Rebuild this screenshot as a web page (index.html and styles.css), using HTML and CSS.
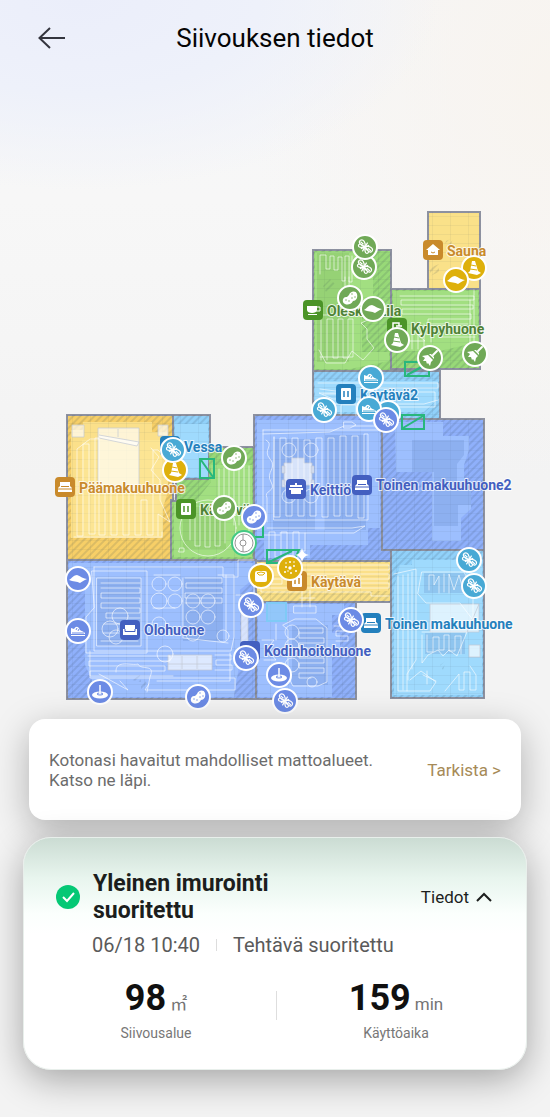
FILE: index.html
```html
<!DOCTYPE html>
<html lang="fi">
<head>
<meta charset="utf-8">
<meta name="viewport" content="width=device-width, initial-scale=1">
<title>Siivouksen tiedot</title>
<link rel="stylesheet" href="styles.css">
</head>
<body>
<div class="screen">
  <header class="topbar">
    <button class="back" type="button" aria-label="Takaisin">
      <svg width="28" height="24" viewBox="0 0 28 24"><path d="M27 12H2M12 2 1.500 12 12 22"/></svg>
    </button>
    <h1 class="topbar-title">Siivouksen tiedot</h1>
  </header>

  <main class="content">
    <svg class="map" viewBox="0 76 550 642" role="img" aria-label="Kodin kartta">
      <defs>
        <pattern id="hatch" width="5" height="5" patternUnits="userSpaceOnUse" patternTransform="rotate(45)">
          <rect width="2" height="5" class="hatch-line"/>
        </pattern>
        <pattern id="tiles" width="18" height="9" patternUnits="userSpaceOnUse">
          <path class="tile-line" d="M0 .5H18M.5 0V9"/>
        </pattern>
        <symbol id="knot" viewBox="-12 -12 24 24">
          <g transform="rotate(42)" fill="none" stroke="#fff" stroke-width="1.200">
            <path d="M0 0C-2-4-7-5-8-2S-4 2 0 0C-4 0-7 1-6 3S-2 3 0 0C2-4 7-5 8-2S4 2 0 0C4 0 7 1 6 3S2 3 0 0"/>
            <path d="M-1-5 1 5M2-4-2 4M-7-1-3-1M3-1 7-1"/>
          </g>
        </symbol>
        <symbol id="shoe" viewBox="-12 -12 24 24">
          <path fill="#fff" d="M-7-3-4-2C-2-5 0-5 2-1 4 1 7 0 7 3H-7Z"/><path stroke="#fff" d="M-7 4.500H7"/><path class="cut" d="M-1-3-2-1M1-2 0 0M-6 2H6"/>
        </symbol>
        <symbol id="rug" viewBox="-12 -12 24 24"><path fill="#fff" d="M-9 1C-6-1-4-4-1-4 2-3 6 0 9 0 6 1 4 3 2 4-1 2-5 3-9 1Z"/></symbol>
        <symbol id="cone" viewBox="-12 -12 24 24">
          <path fill="#fff" d="M-2-7H1L4 3 7 5 3 7-6 5-4 3Z"/><path class="cut" d="M-3-3 2-2M-4 1 3 2"/>
        </symbol>
        <symbol id="blob" viewBox="-12 -12 24 24">
          <path fill="#fff" d="M-1-3C0-7 6-8 7-4 8 0 6 3 3 3 1 7-3 7-5 6-9 4-7-2-3-1Z"/>
          <g class="cut-fill"><circle cx="2" cy="-4" r=".7"/><circle cx="5" cy="-1" r=".7"/><circle cx="-4" cy="2" r=".7"/><circle cx="-1" cy="3" r=".7"/><circle cx="2" cy="0" r=".7"/></g>
        </symbol>
        <symbol id="broom" viewBox="-12 -12 24 24">
          <path stroke="#fff" stroke-width="2" stroke-linecap="round" d="M7-7 3-3"/><path fill="#fff" d="M-1-4 1-4 4-1 4 1Z"/><path fill="#fff" d="M-2-3 3 2 1 4 0 8-2 5-3 6-4 3-7 3-5 0-8-2Z"/>
        </symbol>
        <symbol id="plate" viewBox="-12 -12 24 24">
          <ellipse cy="3" rx="8" ry="3.500" fill="#fff"/><ellipse class="cut" cy="2" rx="3" ry="1" fill="none"/><path stroke="#fff" stroke-width="1.500" d="M0-7V2"/>
        </symbol>
        <symbol id="scale" viewBox="-12 -12 24 24">
          <rect x="-6" y="-5" width="12" height="11" rx="2" fill="#fff"/><path class="cut" fill="none" d="M-4-3Q0-5 4-3L2-1H-2Z"/>
        </symbol>
        <symbol id="dots" viewBox="-12 -12 24 24">
          <g fill="#fff"><circle r="1.700"/><circle cx="-4" cy="-1" r="1"/><circle cx="4" cy="-2" r="1"/><circle cx="0" cy="-6" r="1"/><circle cx="-5" cy="4" r="1"/><circle cx="1" cy="5" r="1"/><circle cx="6" cy="3" r="1"/><circle cx="-2" cy="3" r=".8"/><circle cx="-4" cy="-5" r=".8"/><circle cx="4" cy="-6" r=".8"/></g>
        </symbol>
        <symbol id="bed" viewBox="-10 -10 20 20"><path fill="#fff" d="M-5-5H5V-1L7 1V5H-7V1L-5-1Z"/><path class="cut" d="M-7 2H7M-4-.5H4"/></symbol>
        <symbol id="door" viewBox="-10 -10 20 20"><rect x="-5" y="-6" width="10" height="12" rx="1" fill="#fff"/><path class="cut" stroke-width="1.500" d="M-2-3V3M2-3V3"/></symbol>
        <symbol id="sofa" viewBox="-10 -10 20 20"><path fill="#fff" d="M-5-5H5V-1H7V5H-7V-1H-5Z"/><path class="cut" fill="none" d="M-5-1V1.500H5V-1"/></symbol>
        <symbol id="pot" viewBox="-10 -10 20 20"><path fill="#fff" d="M-1-6H1V-4H6V-2H-6V-4H-1ZM-7-1H7V1H5V5H-5V1H-7Z"/></symbol>
        <symbol id="cup" viewBox="-10 -10 20 20"><path fill="#fff" d="M-6-4H4V0C4 4-6 4-6 0ZM-5 4H4V5H-5Z"/><path fill="none" stroke="#fff" d="M4-3H7V1H3"/></symbol>
        <symbol id="house" viewBox="-10 -10 20 20"><path fill="#fff" d="M0-6 7 0H5V5H-5V0H-7Z"/><path class="cut" fill="none" d="M-2 2Q0 4 2 2"/></symbol>
        <symbol id="shower" viewBox="-10 -10 20 20"><path fill="none" stroke="#fff" stroke-width="1.500" d="M-4 6V-5H2V-2M-1-2H5"/></symbol>
      </defs>

      <!-- Rooms -->
      <g class="rooms">
        <path class="room yellow" d="M428 212H480V289H428Z"/>
        <path class="room green" d="M313 250H391V371H313Z"/>
        <path class="room green" d="M391 289H480V369H391Z"/>
        <path class="room sky" d="M313 371H440V419H313Z"/>
        <path class="room blue" d="M254 415H382V550H391V561H254Z"/>
        <path class="room blue" d="M382 419H484V550H382Z"/>
        <path class="room sky" d="M391 550H484V698H391Z"/>
        <path class="room amber" d="M67 415H173V500H171V560H67Z"/>
        <path class="room sky" d="M173 415H210V479H173Z"/>
        <path class="room green" d="M208 447H254V560H171V501H176V479H208Z"/>
        <path class="room yellow" d="M256 561H391V602H256Z"/>
        <path class="room blue" d="M67 560H256V699H67Z"/>
        <path class="room blue" d="M256 602H356V699H256Z"/>
      </g>
      <path class="hatching" d="M391 289H480V369H440V419H484V698H391V602H356V699H67V415H210V447H254V415H313V250H391Z"/>

      <!-- Areas the robot has covered -->
      <g class="covered">
        <path class="yellow" d="M430 214H478V287H430Z"/>
        <path class="green" d="M315 252H365L373 275V300L362 312V352H389V361L350 369H315ZM393 291H478V342L440 351H393Z"/>
        <path class="sky" d="M315 381H438V399L424 412H315Z"/>
        <path class="blue" d="M257 420H380V528H368V545H310V558H264V540H257Z"/>
        <path class="blue" d="M395 422H443V436H469V450L464 465V489H471V509L461 518V541H432V472H396Z"/>
        <path class="sky" d="M400 565H412V560H482V695H394V588Z"/>
        <path class="pale" d="M71 430H83V422H152V432H168V491L163 508V538H71Z"/>
        <path class="sky" d="M175 424H208V477H175Z"/>
        <path class="green" d="M211 465H252V557H174V502H195L211 482Z"/>
        <path class="pale" d="M258 563H388V591H258Z"/>
        <path class="blue" d="M69 563H253V579L240 590V660L234 697H92V680L85 665V582H69Z"/>
        <path class="blue" d="M258 604H344V615H332V633H340V650H332V697H258Z"/>
      </g>
      <g class="hatching">
        <path d="M446 241 453 238 451 245 444 247ZM430 268 439 264V272L430 276ZM323 286 330 279 335 284 326 292ZM141 684 145 680 147 684 141 692ZM132 680 140 675 141 682ZM440 665 446 661 443 670Z"/>
      </g>
      <path class="tiles" d="M428 212H480V289H480V369H440V419H484V698H391V602H356V699H67V415H210V447H254V415H313V250H391V289H428Z"/>

      <!-- Carpets and furniture -->
      <g class="carpet">
        <path d="M412 440H464V455L457 464V483H471V505H458V526H434V472H412Z"/>
        <path d="M97 578H141V646H97ZM183 578H223V641H183Z"/>
        <path d="M273 439H315V530H273ZM325 435H366V530H325Z"/>
        <path d="M82 440H163V536H82Z" class="warm"/>
        <path d="M183 507H226V549H183Z" class="leaf"/>
        <path d="M317 253H349V362H317Z" class="leaf"/>
        <path d="M424 573H466V593H424ZM425 633H465V654H425ZM292 625H328V685H292Z"/>
      </g>
      <g class="furniture">
        <path d="M98 428H139V490H98ZM158 425H168V436H158ZM72 425H84V437H72Z"/>
        <path d="M99 435 139 442 137 446 99 438M118 429V437"/>
        <path d="M284 463H292V458H304V463H312V485H284ZM282 466H285V473H282ZM311 466H314V473H311ZM282 480H285V487H282ZM311 480H314V487H311Z"/>
        <path d="M168 655H212V670H168ZM182 656V669M197 656V669M168 664H212"/>
        <path d="M430 604H479V632H430ZM469 645H480V657H469ZM479 604 467 632"/>
        <path d="M241 602H248V645H241Z"/>
      </g>

      <!-- Cleaning route -->
      <g class="route">
        <path d="M320 274V255H326V269H330V256H334V270H338V257H342V281H345V256H349V282H352V256M345 277V296M349 277V290M321 319V360M327 360V319H333V358H338V319H343V358H348V319H353V357H320M318 315H367L368 320 361 323 367 329V339L374 348 363 360 352 351 345 363H326L319 350"/>
        <path d="M400 296H474V300H401V305H473V309H402V314H471V319H428V324H468M400 341H425L417 334H431V342M412 325V349M418 324V349M424 324V349M474 290V343M470 300V350M440 337H475"/>
        <path d="M318 383H438V388H362V392H435V407H395M320 389 351 393H319L333 399H380M320 404H424L438 400M341 415V405H356V416M323 394H338"/>
        <path d="M263 430H383M263 430V535H280M263 434 330 432 344 426H380M266 440C275 445 262 450 270 459S265 472 271 482 263 490 267 498V522M344 422H352L356 425 350 428H344Z"/>
        <path d="M274 437V517H280V438H286V516H292V438H298V516H304V440H310V516H316V438H322V517H328V438H334V516H340V436H346V516H352V436H358V518H364V434H368V520H274Z"/>
        <path d="M267 528H352L365 526 354 533H280M269 558V532H275V557H281V532H287V557H293V532H299V551H305V533"/>
        <circle cx="289" cy="450" r="7"/><circle cx="311" cy="450" r="7"/><circle cx="289" cy="496" r="7"/><circle cx="311" cy="496" r="7"/>
        <path d="M99 439H90L77 449V536H83V444H89V534H95V438H99V535H105V490H111V535H117V490H123V535H129V490H135V535H141V500H147V535H153V450H158L163 455M74 537H162V532M151 448 159 457 151 470 160 480V500L170 522 158 514V536"/>
        <circle cx="208" cy="528" r="28"/>
        <path d="M190 540V512H195V546H200V506H205V547H210V506H215V546H220V509H225V543M219 469V507M224 468V500M229 467V500M234 467V525M239 467V525M244 466V525M249 466V535M180 548H184V552H179Z"/>
        <path d="M258 565H389V570H281V574H389V579H318V583H389V588H261V592H371V596H389M262 579H282V584H258"/>
        <path d="M94 567H223V577H238V560H254M94 567V651H231L234 637V575H218M92 571H147V653H86V617L94 608ZM97 578H141V646H97Z"/>
        <path d="M101 583H140M101 588H140V593H101V598H140V603H101V608H140V613H106V618H140M104 624H120M103 633H119M101 641H138M154 575H180M153 608H175M156 634H181M185 578H222V583H186V588H222V593H185V598H222V603H185M88 656H170V661H89V666H165V671H90V676H173M90 651V678H235V690H145L149 684M230 653V681H157M215 655H231V660H216V665H232V670H215M183 578V638L228 643M226 575V640"/>
        <path d="M116 672C115 659 132 666 138 664 141 671 156 663 150 677L147 692M99 674 128 690 120 681M254 575V595H236"/>
        <circle cx="159" cy="584" r="7"/><circle cx="159" cy="601" r="8"/><circle cx="159" cy="624" r="7"/><circle cx="175" cy="584" r="7"/><circle cx="175" cy="601" r="7"/><circle cx="193" cy="601" r="7"/><circle cx="208" cy="601" r="7"/><circle cx="193" cy="617" r="7"/><circle cx="208" cy="617" r="7"/><circle cx="193" cy="634" r="7"/><circle cx="223" cy="636" r="6"/><circle cx="120" cy="616" r="8"/><circle cx="110" cy="629" r="8"/><circle cx="165" cy="654" r="8"/><circle cx="116" cy="637" r="7"/>
        <path d="M283 625 295 619H316L327 628V682L318 686H293L288 677V630ZM276 624V640M262 640H274L267 649 276 660H264M299 628H323V633H299V638H324V643H299V648H324V653H299V658H324V663H299V668H324V673H299V678H311M334 626H348V631H336V636H348V641H336M294 606H316V613H294ZM302 590V607M310 590V607M300 598H315"/>
        <circle cx="292" cy="632" r="7"/><circle cx="292" cy="646" r="7"/><circle cx="292" cy="665" r="7"/><circle cx="312" cy="682" r="5"/>
        <path d="M394 574 416 569V660L407 674V691M398 576V691H430L436 682 421 671 410 680M403 575V690M408 574V680M412 572V669M422 572H464L473 590V620L460 603H426L418 594ZM429 590V575H434V585L439 576V593M444 574V592M449 593V574L454 590 459 575 464 593"/>
        <path d="M427 635V652H433V637H439V650H444V635H449V651H455V636H461V654M422 632H467L457 656 449 650 443 656 438 650 428 655 422 663V635M427 671V684M445 691 459 674V690H464V672H470V690H476V675L470 666M436 681 423 675"/>
      </g>
      <path class="sky-box" d="M267 603H286V621H267Z"/>
      <g class="doors">
        <path d="M405 362H429V376H405ZM407 375 427 364M402 415H424V429H402ZM403 428 423 416M200 459H214V478H200ZM201 460 213 477M267 550H299L293 563H267ZM267 563 292 551M255 525H263V537H255"/>
      </g>

      <!-- Room name labels -->
      <g class="names">
        <g class="c-gold"><rect x="423" y="240" width="20" height="20" rx="4"/><use href="#house" x="423" y="240" width="20" height="20"/><text x="447" y="256">Sauna</text></g>
        <g class="c-green"><rect x="303" y="300" width="20" height="20" rx="4"/><use href="#cup" x="303" y="300" width="20" height="20"/><text x="327" y="316">Oleskelutila</text></g>
        <g class="c-green"><rect x="387" y="318" width="20" height="20" rx="4"/><use href="#shower" x="387" y="318" width="20" height="20"/><text x="411" y="334">Kylpyhuone</text></g>
        <g class="c-sky"><rect x="336" y="384" width="20" height="20" rx="4"/><use href="#door" x="336" y="384" width="20" height="20"/><text x="360" y="400">Käytävä2</text></g>
        <g class="c-sky"><rect x="160" y="436" width="20" height="20" rx="4"/><text x="184" y="452">Vessa</text></g>
        <g class="c-gold"><rect x="55" y="477" width="20" height="20" rx="4"/><use href="#bed" x="55" y="477" width="20" height="20"/><text x="79" y="493">Päämakuuhuone</text></g>
        <g class="c-green"><rect x="176" y="499" width="20" height="20" rx="4"/><use href="#door" x="176" y="499" width="20" height="20"/><text x="200" y="515">Käytävä</text></g>
        <g class="c-blue"><rect x="286" y="479" width="20" height="20" rx="4"/><use href="#pot" x="286" y="479" width="20" height="20"/><text x="310" y="495">Keittiö</text></g>
        <g class="c-blue"><rect x="352" y="475" width="20" height="20" rx="4"/><use href="#bed" x="352" y="475" width="20" height="20"/><text x="376" y="490">Toinen makuuhuone2</text></g>
        <g class="c-gold"><rect x="287" y="571" width="20" height="20" rx="4"/><use href="#door" x="287" y="571" width="20" height="20"/><text x="311" y="587">Käytävä</text></g>
        <g class="c-blue"><rect x="120" y="620" width="20" height="20" rx="4"/><use href="#sofa" x="120" y="620" width="20" height="20"/><text x="144" y="635">Olohuone</text></g>
        <g class="c-blue"><rect x="240" y="641" width="20" height="20" rx="4"/><text x="264" y="656">Kodinhoitohuone</text></g>
        <g class="c-sky"><rect x="361" y="613" width="20" height="20" rx="4"/><use href="#bed" x="361" y="613" width="20" height="20"/><text x="385" y="629">Toinen makuuhuone</text></g>
      </g>

      <!-- Obstacles -->
      <g class="pins">
        <g class="p-green">
          <circle cx="364" cy="267" r="12"/><use href="#knot" x="352" y="255" width="24" height="24"/>
          <circle cx="365" cy="247" r="12"/><use href="#knot" x="353" y="235" width="24" height="24"/>
          <circle cx="350" cy="298" r="12"/><use href="#blob" x="338" y="286" width="24" height="24"/>
          <circle cx="373" cy="309" r="12"/><use href="#rug" x="361" y="297" width="24" height="24"/>
          <circle cx="397" cy="340" r="12"/><use href="#cone" x="385" y="328" width="24" height="24"/>
          <circle cx="430" cy="358" r="12"/><use href="#broom" x="418" y="346" width="24" height="24"/>
          <circle cx="475" cy="354" r="12"/><use href="#broom" x="463" y="342" width="24" height="24"/>
          <circle cx="234" cy="458" r="12"/><use href="#blob" x="222" y="446" width="24" height="24"/>
          <circle cx="224" cy="508" r="12"/><use href="#blob" x="212" y="496" width="24" height="24"/>
        </g>
        <g class="p-gold">
          <circle cx="474" cy="268" r="12"/><use href="#cone" x="462" y="256" width="24" height="24"/>
          <circle cx="456" cy="280" r="12"/><use href="#rug" x="444" y="268" width="24" height="24"/>
          <circle cx="175" cy="470" r="12"/><use href="#cone" x="163" y="458" width="24" height="24"/>
          <circle cx="261" cy="576" r="12"/><use href="#scale" x="249" y="564" width="24" height="24"/>
          <circle cx="290" cy="568" r="12"/><use href="#dots" x="278" y="556" width="24" height="24"/>
        </g>
        <g class="p-sky">
          <circle cx="371" cy="378" r="12"/><use href="#shoe" x="359" y="366" width="24" height="24"/>
          <circle cx="324" cy="410" r="12"/><use href="#knot" x="312" y="398" width="24" height="24"/>
          <circle cx="388" cy="413" r="12"/>
          <circle cx="369" cy="409" r="12"/><use href="#shoe" x="357" y="397" width="24" height="24"/>
          <circle cx="173" cy="450" r="12"/><use href="#knot" x="161" y="438" width="24" height="24"/>
          <circle cx="469" cy="560" r="12"/><use href="#knot" x="457" y="548" width="24" height="24"/>
          <circle cx="474" cy="586" r="12"/><use href="#knot" x="462" y="574" width="24" height="24"/>
        </g>
        <g class="p-blue">
          <circle cx="386" cy="420" r="12"/><use href="#knot" x="374" y="408" width="24" height="24"/>
          <circle cx="254" cy="517" r="12"/><use href="#blob" x="242" y="505" width="24" height="24"/>
          <circle cx="78" cy="579" r="12"/><use href="#rug" x="66" y="567" width="24" height="24"/>
          <circle cx="78" cy="631" r="12"/><use href="#shoe" x="66" y="619" width="24" height="24"/>
          <circle cx="100" cy="692" r="12"/><use href="#plate" x="88" y="680" width="24" height="24"/>
          <circle cx="198" cy="697" r="12"/><use href="#blob" x="186" y="685" width="24" height="24"/>
          <circle cx="251" cy="605" r="12"/><use href="#knot" x="239" y="593" width="24" height="24"/>
          <circle cx="246" cy="658" r="12"/><use href="#knot" x="234" y="646" width="24" height="24"/>
          <circle cx="351" cy="620" r="12"/><use href="#knot" x="339" y="608" width="24" height="24"/>
          <circle cx="279" cy="675" r="12"/><use href="#plate" x="267" y="663" width="24" height="24"/>
          <circle cx="285" cy="701" r="12"/><use href="#knot" x="273" y="689" width="24" height="24"/>
        </g>
      </g>
      <g class="robot">
        <circle class="robot-ring" cx="244" cy="543" r="12"/><circle class="robot-body" cx="244" cy="543" r="9"/>
        <path class="robot-body" d="M243 534V540M243 546V552"/><circle class="robot-body" cx="243" cy="543" r="3"/>
      </g>
      <path fill="#fff" d="M302 548Q303 554 309 555 303 556 302 562 301 556 295 555 301 554 302 548Z"/>
    </svg>

    <section class="notice">
      <p class="notice-text">Kotonasi havaitut mahdolliset mattoalueet. Katso ne läpi.</p>
      <a class="notice-link" href="#tarkista">Tarkista &gt;</a>
    </section>

    <section class="summary">
      <div class="summary-head">
        <svg class="done" width="24" height="24" viewBox="0 0 24 24"><circle cx="12" cy="12" r="12" fill="#05c875"/><path d="m7 12 4 4 7-8" fill="none" stroke="#fff" stroke-width="2"/></svg>
        <h2 class="summary-title">Yleinen imurointi suoritettu</h2>
        <button class="details" type="button">Tiedot
          <svg width="16" height="10" viewBox="0 0 16 10"><path d="M1 9 8 2 15 9"/></svg>
        </button>
      </div>
      <p class="meta"><span>06/18 10:40</span><span class="meta-rule"></span><span>Tehtävä suoritettu</span></p>
      <div class="stats">
        <div class="stat"><div class="figure"><strong>98</strong><span class="unit">㎡</span></div><div class="caption">Siivousalue</div></div>
        <div class="stat"><div class="figure"><strong>159</strong><span class="unit">min</span></div><div class="caption">Käyttöaika</div></div>
      </div>
    </section>
  </main>
</div>
</body>
</html>
```
FILE: styles.css
```css
* { box-sizing: border-box; }
body {
  margin: 0;
  font-family: Roboto, "Noto Sans CJK SC", sans-serif;
  color: #1c1e1d;
  background: #f3f3f3;
}
h1, h2, p { margin: 0; }
button { padding: 0; border: 0; background: none; font: inherit; color: inherit; }
.screen {
  min-height: 100vh;
  padding-bottom: 48px;
  overflow: hidden;
  background:
    radial-gradient(ellipse 360px 190px at 80px 0, #ebeefa 0, #eef1fa 50%, transparent 100%),
    linear-gradient(100deg, transparent 50%, #f8f4ef 90%) 0 0 / 100% 200px no-repeat,
    linear-gradient(100deg, transparent 50%, #f8f4ef 90%) 0 0 / 100% 200px no-repeat,
    linear-gradient(#f5f6f8, #f7f7f7 200px, #f3f3f3 480px);
  background:
    radial-gradient(ellipse 360px 190px at 80px 0, #ebeefa 0, #eef1fa 50%, transparent 100%),
    radial-gradient(ellipse 300px 400px at 100% 80px, #f8f4ef 0, transparent 100%),
    linear-gradient(#f5f6f8, #f7f7f7 200px, #f3f3f3 480px);
}
.topbar {
  display: grid;
  grid-template-columns: 28px 1fr 28px;
  align-items: center;
  height: 76px;
  padding: 0 38px;
}
.back { display: flex; }
.back path { fill: none; stroke: #34353e; stroke-width: 2; }
.topbar-title { font-size: 26px; font-weight: 400; line-height: 32px; text-align: center; color: #050505; }
.content { display: flex; flex-direction: column; }
.map { display: block; width: 100%; height: auto; }

/* map */
.room { stroke: #8d91a0; stroke-width: 2; }
.yellow { fill: #f9df85; }
.amber { fill: #f7cf67; }
.green { fill: #98d978; }
.sky { fill: #91d1fa; }
.blue { fill: #8fb0fb; }
.hatch-line { fill: #345; fill-opacity: .14; }
.hatching { fill: url(#hatch); }
.tile-line { fill: none; stroke: #345; stroke-opacity: .06; }
.covered .yellow { fill: #fae189; }
.covered .pale { fill: #fbe08a; }
.covered .green { fill: #a2df81; }
.covered .sky { fill: #9fdafd; }
.covered .blue { fill: #9dbffe; }
.tiles { fill: url(#tiles); }
.carpet { fill: #5679c0; fill-opacity: .22; }
.carpet .warm { fill: #fff2a8; fill-opacity: .3; }
.carpet .leaf { fill: #558d35; fill-opacity: .16; }
.furniture { fill: #fff; fill-opacity: .65; stroke: #c2c8d3; stroke-opacity: .7; }
.route { fill: none; stroke: #fff; stroke-opacity: .6; stroke-linejoin: round; stroke-linecap: round; }
.sky-box { fill: #8dcbf8; fill-opacity: .7; stroke: #7fcaf6; stroke-width: 2; }
.doors { fill: none; stroke: #28b77c; stroke-width: 2; }
.names text {
  font-size: 14px;
  font-weight: 700;
  stroke: #fff;
  stroke-opacity: .75;
  stroke-width: 2px;
  stroke-linejoin: round;
  paint-order: stroke;
}
.cut { stroke: var(--tone); }
.cut-fill { fill: var(--tone); }
.c-gold { --tone: #c98a2b; fill: var(--tone); }
.c-green { --tone: #4b9427; fill: var(--tone); }
.c-green text { fill: #4f8236; }
.c-sky { --tone: #2480bd; fill: var(--tone); }
.c-blue { --tone: #435fc0; fill: var(--tone); }
.pins circle { fill: var(--tone); stroke: #fff; stroke-width: 2; }
.p-green { --tone: #70a957; }
.p-gold { --tone: #deb00b; }
.p-sky { --tone: #48a9d5; }
.p-blue { --tone: #6c8be5; }
.robot-ring { fill: #fff; stroke: #43c984; stroke-width: 2; }
.robot-body { fill: #fff; stroke: #969696; stroke-width: 1; }

/* cards */
.notice {
  display: flex;
  align-items: center;
  justify-content: space-between;
  gap: 40px;
  min-height: 101px;
  margin: 1px 29px 17px;
  padding: 20px;
  border-radius: 16px;
  background: #fff;
  box-shadow: 0 10px 36px rgba(0, 0, 0, .28);
}
.notice-text { font-size: 17px; line-height: 20px; color: #6c6c6c; }
.notice-link { flex: none; font-size: 17px; line-height: 20px; color: #a68a57; text-decoration: none; }
.summary {
  position: relative;
  margin: 0 23px;
  padding: 32px 34px 26px 32px;
  border: 1px solid #e8efeb;
  border-radius: 28px;
  background: linear-gradient(#cbdcd3, #e8f5ee 40px, #fbfffd 76px, #fff 96px);
  box-shadow: 0 10px 36px rgba(0, 0, 0, .32);
}
.summary-head { display: grid; grid-template-columns: 24px 200px 1fr; column-gap: 13px; align-items: center; }
.summary-title { font-size: 23px; font-weight: 700; line-height: 27px; }
.details { display: flex; align-items: center; justify-content: flex-end; gap: 7px; font-size: 17px; line-height: 20px; }
.details path { fill: none; stroke: #1c1e1d; stroke-width: 2; }
.meta { display: flex; align-items: center; gap: 16px; margin: 9px 0 0 36px; font-size: 20px; line-height: 24px; color: #5a5a5a; }
.meta-rule { width: 1px; height: 12px; background: #ddd; }
.stats { display: grid; grid-template-columns: 1fr 1fr; margin: 20px -24px 0 -20px; }
.stat { text-align: center; }
.stat + .stat { background: linear-gradient(#dedede, #dedede) 0 14px / 1px 29px no-repeat; }
.figure { display: flex; align-items: baseline; justify-content: center; gap: 4px; height: 42px; line-height: 42px; }
.figure strong { font-size: 36px; color: #101010; }
.unit { font-size: 17px; color: #747474; }
.caption { margin-top: 4px; font-size: 14px; line-height: 20px; color: #777; }
```
